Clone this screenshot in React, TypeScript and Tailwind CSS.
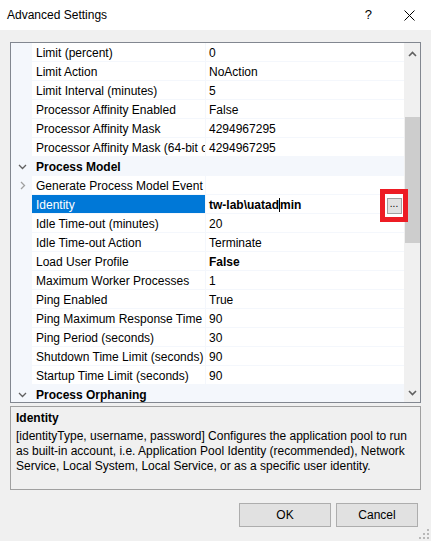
import React from "react";

type Row =
  | { kind: "cat"; name: string }
  | { kind: "prop"; name: string; value: string; bold?: boolean; sub?: boolean; selected?: boolean };

const rows: Row[] = [
  { kind: "prop", name: "Limit (percent)", value: "0" },
  { kind: "prop", name: "Limit Action", value: "NoAction" },
  { kind: "prop", name: "Limit Interval (minutes)", value: "5" },
  { kind: "prop", name: "Processor Affinity Enabled", value: "False" },
  { kind: "prop", name: "Processor Affinity Mask", value: "4294967295" },
  { kind: "prop", name: "Processor Affinity Mask (64-bit option)", value: "4294967295" },
  { kind: "cat", name: "Process Model" },
  { kind: "prop", name: "Generate Process Model Event Log Entry", value: "", sub: true },
  { kind: "prop", name: "Identity", value: "tw-lab\\uatadmin", bold: true, selected: true },
  { kind: "prop", name: "Idle Time-out (minutes)", value: "20" },
  { kind: "prop", name: "Idle Time-out Action", value: "Terminate" },
  { kind: "prop", name: "Load User Profile", value: "False", bold: true },
  { kind: "prop", name: "Maximum Worker Processes", value: "1" },
  { kind: "prop", name: "Ping Enabled", value: "True" },
  { kind: "prop", name: "Ping Maximum Response Time (seconds)", value: "90" },
  { kind: "prop", name: "Ping Period (seconds)", value: "30" },
  { kind: "prop", name: "Shutdown Time Limit (seconds)", value: "90" },
  { kind: "prop", name: "Startup Time Limit (seconds)", value: "90" },
  { kind: "cat", name: "Process Orphaning" },
];

function ChevronDown() {
  return (
    <svg width="9" height="6" viewBox="0 0 9 6" className="text-[#606060]">
      <path d="M1 1 L4.5 4.5 L8 1" fill="none" stroke="currentColor" strokeWidth="1.3" />
    </svg>
  );
}

function ChevronRight() {
  return (
    <svg width="6" height="9" viewBox="0 0 6 9" className="text-[#a0a0a0]">
      <path d="M1 1 L4.5 4.5 L1 8" fill="none" stroke="currentColor" strokeWidth="1.3" />
    </svg>
  );
}

function GridRow({ row }: { row: Row }) {
  if (row.kind === "cat") {
    return (
      <div className="flex h-[19px] shrink-0 items-center bg-[#f4f7fc] pt-[1px]">
        <div className="flex w-[21px] shrink-0 justify-center pl-[2px]">
          <ChevronDown />
        </div>
        <span className="pl-[4px] font-bold text-black">{row.name}</span>
      </div>
    );
  }
  return (
    <div className="flex h-[19px] shrink-0">
      <div className="flex w-[21px] shrink-0 items-center justify-center bg-[#f4f7fc] pl-[2px]">
        {row.sub ? <ChevronRight /> : null}
      </div>
      <div
        className={
          "flex w-[174px] shrink-0 items-center overflow-hidden whitespace-nowrap border-b border-r border-[#f4f7fc] pl-[4px] pt-[1px] " +
          (row.selected ? "bg-[#0078d7] text-white" : "bg-white text-black")
        }
      >
        {row.name}
      </div>
      <div
        className={
          "flex flex-1 items-center overflow-hidden whitespace-nowrap border-b border-[#f4f7fc] bg-white pl-[3px] pt-[1px] text-black " +
          (row.bold ? "font-bold" : "")
        }
      >
        {row.selected ? (
          <>
            <span>tw-lab\uatad</span>
            <span className="inline-block h-[14px] w-px bg-black" />
            <span>min</span>
          </>
        ) : (
          row.value
        )}
      </div>
    </div>
  );
}

function ScrollBar() {
  return (
    <div className="flex w-[16px] shrink-0 flex-col bg-[#f0f0f0]">
      <div className="flex h-[17px] items-center justify-center pt-[4px]">
        <svg width="9" height="6" viewBox="0 0 9 6" className="text-[#606060]">
          <path d="M1 5 L4.5 1.5 L8 5" fill="none" stroke="currentColor" strokeWidth="1.6" />
        </svg>
      </div>
      <div className="h-[57px]" />
      <div className="ml-[1px] h-[126px] bg-[#cdcdcd]" />
      <div className="flex-1" />
      <div className="flex h-[17px] items-center justify-center pb-[2px]">
        <svg width="9" height="6" viewBox="0 0 9 6" className="text-[#606060]">
          <path d="M1 1 L4.5 4.5 L8 1" fill="none" stroke="currentColor" strokeWidth="1.6" />
        </svg>
      </div>
    </div>
  );
}

export default function App() {
  return (
    <div
      className="flex h-[541px] w-[431px] flex-col bg-[#f0f0f0] text-[12px] text-black"
      style={{ fontFamily: '"Liberation Sans", Arial, sans-serif' }}
    >
      <div className="flex h-[30px] shrink-0 items-center bg-white pl-[7px]">
        <span className="text-[12px]">Advanced Settings</span>
        <span className="ml-auto mr-[32px] text-[13px]">?</span>
        <svg width="11" height="11" viewBox="0 0 11 11" className="mr-[16px]">
          <path d="M0.5 0.5 L10.5 10.5 M10.5 0.5 L0.5 10.5" stroke="#000" strokeWidth="1" />
        </svg>
      </div>

      <div className="relative mx-[10px] mt-[12px] flex h-[361px] shrink-0 border border-[#828790] bg-white">
        <div className="flex flex-1 flex-col overflow-hidden">
          {rows.map((r, i) => (
            <GridRow key={i} row={r} />
          ))}
        </div>
        <ScrollBar />
        {/* highlighted "..." button for the Identity row */}
        <div className="absolute left-[369px] top-[146px] z-10 flex h-[33px] w-[28px] items-center justify-center border-[5px] border-[#ed1c24] bg-white">
          <div className="flex h-[16px] w-[15px] items-start justify-center border border-[#a0a0a0] bg-[#e1e1e1] text-[10px] leading-[10px]">
            ...
          </div>
        </div>
      </div>

      <div className="mx-[10px] mt-[3px] h-[84px] shrink-0 border border-[#a0a0a0] bg-[#f0f0f0] px-[5px] pt-[3px]">
        <div className="font-bold leading-[16px]">Identity</div>
        <div className="mt-[3px] leading-[15px]">
          [identityType, username, password] Configures the application pool to run as built-in account, i.e.
          Application Pool Identity (recommended), Network Service, Local System, Local Service, or as a specific
          user identity.
        </div>
      </div>

      <div className="mt-[13px] flex shrink-0 justify-end gap-[5px] pr-[13px]">
        <button className="h-[24px] w-[92px] border border-[#adadad] bg-[#e1e1e1] text-[12px]">OK</button>
        <button className="h-[24px] w-[82px] border border-[#adadad] bg-[#e1e1e1] text-[12px]">Cancel</button>
      </div>

      <div className="mt-auto flex justify-end pb-[2px] pr-[2px]">
        <svg width="10" height="10" viewBox="0 0 10 10" fill="#b8b8b8">
          <rect x="8" y="0" width="2" height="2" />
          <rect x="4" y="4" width="2" height="2" />
          <rect x="8" y="4" width="2" height="2" />
          <rect x="0" y="8" width="2" height="2" />
          <rect x="4" y="8" width="2" height="2" />
          <rect x="8" y="8" width="2" height="2" />
        </svg>
      </div>
    </div>
  );
}
